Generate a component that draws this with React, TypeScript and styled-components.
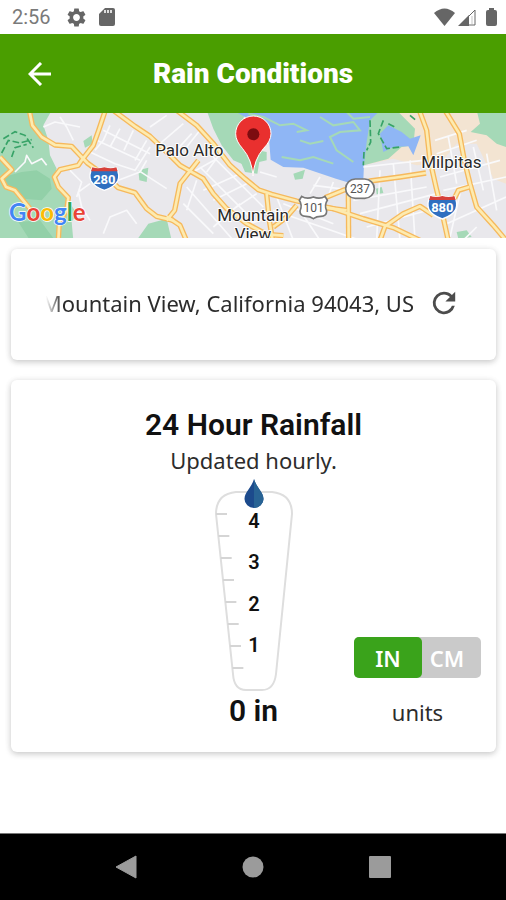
import React, { useState } from "react";
import styled, { createGlobalStyle } from "styled-components";

const GlobalStyle = createGlobalStyle`
  *, *::before, *::after { box-sizing: border-box; }
  body { margin: 0; background: #ffffff; color: #1b1b1b; font-family: "Noto Sans", "Open Sans", sans-serif; }
  h1, h2, p { margin: 0; }
  button { border: 0; padding: 0; background: none; font: inherit; color: inherit; cursor: pointer; }
`;

const Screen = styled.div`
  display: flex;
  flex-direction: column;
  min-height: 100vh;
`;

const StatusBar = styled.div`
  display: flex;
  align-items: center;
  justify-content: space-between;
  height: 34px;
  padding: 0 8px 0 12px;
  color: #666666;
`;

const StatusGroup = styled.div<{ $gap: number }>`
  display: flex;
  align-items: center;
  gap: ${(p) => p.$gap}px;

  svg { display: block; }
`;

const Clock = styled.time`
  font: 400 20px/34px Roboto, sans-serif;
  color: #7a7a7a;
  margin-right: 3px;
`;

const Header = styled.header`
  display: grid;
  grid-template-columns: 80px 1fr 80px;
  align-items: center;
  height: 79px;
  background: #4a9e00;
  color: #ffffff;
`;

const BackButton = styled.button`
  display: grid;
  place-items: center;
  height: 56px;
`;

const Title = styled.h1`
  font: 900 28px/36px Roboto, sans-serif;
  text-align: center;
`;

const MapView = styled.svg`
  display: block;
  width: 100%;
  height: 125px;
  background: #e9e8ec;
`;

const Cards = styled.main`
  display: flex;
  flex: 1;
  flex-direction: column;
  gap: 20px;
  padding: 11px 10px 20px 11px;
`;

const Card = styled.section`
  border-radius: 6px;
  background: #ffffff;
  box-shadow: 0 2px 6px rgba(0, 0, 0, 0.2), 0 0 8px rgba(0, 0, 0, 0.04);
`;

const LocationCard = styled(Card)`
  display: flex;
  align-items: center;
  gap: 16px;
  height: 111px;
  padding: 0 38px 3px 35px;
`;

const Address = styled.p`
  display: flex;
  flex: 1;
  min-width: 0;
  justify-content: flex-end;
  overflow: hidden;
  white-space: nowrap;
  font-size: 22px;
  line-height: 32px;
  color: #2c2c2c;
  mask-image: linear-gradient(to right, transparent, #000 16px);
`;

const RefreshButton = styled.button`
  display: grid;
  place-items: center;
  color: #4c4c4c;
`;

const RainCard = styled(Card)`
  padding: 25px 15px 22px;
`;

const Heading = styled.h2`
  font: 600 30px/39px Roboto, sans-serif;
  color: #111111;
  text-align: center;
`;

const Subheading = styled.p`
  font-size: 22px;
  line-height: 32px;
  color: #2c2c2c;
  text-align: center;
`;

const Readings = styled.div`
  display: grid;
  grid-template-columns: 1fr auto 1fr;
  align-items: end;
  margin-top: 2px;
`;

const GaugeColumn = styled.div`
  display: flex;
  flex-direction: column;
  align-items: center;
  grid-column: 2;
`;

const GaugeSvg = styled.svg`
  display: block;
  width: 80px;
  height: 214px;
`;

const Total = styled.output`
  font: 600 30px/38px Roboto, sans-serif;
  color: #111111;
`;

const UnitsColumn = styled.div`
  display: flex;
  flex-direction: column;
  align-items: center;
  justify-self: end;
  gap: 16px;
`;

const Toggle = styled.div`
  display: flex;
  border-radius: 5px;
  background: #cacaca;
`;

const ToggleOption = styled.button<{ $active: boolean }>`
  position: relative;
  z-index: ${(p) => (p.$active ? 1 : 0)};
  width: 68px;
  height: 41px;
  border-radius: 5px;
  background: ${(p) => (p.$active ? "#3aa31b" : "transparent")};
  color: #ffffff;
  font-size: 22px;
  font-weight: 600;

  & + & { margin-left: -9px; }
`;

const UnitsLabel = styled.span`
  font-size: 22px;
  line-height: 36px;
  color: #2c2c2c;
`;

const NavBar = styled.nav`
  display: flex;
  align-items: center;
  justify-content: center;
  gap: 83px;
  height: 67px;
  border-top: 1px solid #777777;
  background: #000000;
  color: #9b9b9b;
`;

const NavButton = styled.button`
  display: grid;
  place-items: center;
  width: 44px;
  height: 44px;
`;

const highways = [
  "M88 0 L97 45 L125 80 L165 104 L215 108 L262 158 L320 200 L355 232 L405 247 L440 295 L470 318 L520 330",
  "M316 0 L296 60 L280 105 L245 150 L235 165 L180 178 L163 200 L175 230 L205 262 L200 300 L178 335 L175 390",
  "M340 0 L405 48 L450 78 L505 130 L540 165 L610 205 L640 250 L680 295 L740 340 L800 372 L850 376",
  "M530 0 L590 45 L640 100 L690 165 L735 205 L775 238 L815 252 L890 272 L1000 295 L1090 325 L1180 352 L1260 390",
  "M595 150 L540 220 L524 300 L500 330 M500 318 L540 345 L560 392",
  "M800 250 L808 330 L818 392 M890 285 L860 320 L820 350",
  "M975 262 L1030 240 L1110 212 L1200 200 L1278 188 M975 292 L1040 300",
  "M1258 0 L1280 60 L1290 150 L1308 230 L1325 300 L1345 392",
  "M1335 0 L1378 70 L1393 150 L1410 220 L1430 290 L1480 345 L1518 390",
  "M1408 230 L1375 240 L1358 275 M1140 390 L1155 348 L1210 310 L1260 288 L1300 315",
  "M1045 250 L1046 392",
  "M0 140 L35 178 L5 205 L18 230 L45 240 L90 295",
];

const streets = [
  "M130 50 L165 35 L240 50 M180 20 L200 50 L220 90 M330 45 L310 90 L285 120 M360 55 L330 110 M400 60 L372 120 M440 90 L405 150 M310 60 L450 130 M290 90 L420 150 M270 125 L345 160 L405 180 L450 110",
  "M355 210 L420 185 L440 150 M415 180 L500 235 M270 220 L235 245 L245 290 L270 330 M310 370 L330 320 L380 300 L410 340 M210 180 L245 215 L230 260",
  "M450 50 L500 15 M480 100 L550 40 M520 130 L575 70 M620 185 L660 130 M600 60 L560 110",
  "M570 190 L650 145 M610 240 L720 190 M640 270 L740 220 M680 310 L770 250 M600 170 L760 330 M640 140 L790 290 M560 230 L700 390 M550 280 L640 370 M590 210 L560 300 M640 350 L720 280",
  "M780 185 L830 200 M830 260 L880 390 M900 300 L960 390 M940 225 L1060 240 M930 250 L960 200 M1000 215 L970 300 M850 280 L1000 340 M820 300 L1080 390 M750 340 L870 300",
  "M1090 170 L1270 150 M1140 180 L1130 390 M1180 160 L1200 390 M1230 150 L1245 390 M1060 270 L1280 230 M1080 310 L1310 250 M1100 350 L1320 290",
  "M1305 90 L1400 60 M1310 130 L1430 90 M1320 200 L1500 150 M1330 240 L1518 200 M1340 340 L1518 260 M1420 110 L1450 240 M1460 130 L1490 300 M1345 80 L1370 220 M1380 250 L1350 380 M1430 350 L1390 390",
  "M45 185 L75 155 L80 135 L95 160 L125 145 L140 165",
];

const interstateRoutes = [
  { label: "280", x: 313, y: 206 },
  { label: "880", x: 1327, y: 292 },
];

const logoLetters = [
  ["G", "#4285f4"],
  ["o", "#ea4335"],
  ["o", "#fbbc05"],
  ["g", "#4285f4"],
  ["l", "#34a853"],
  ["e", "#ea4335"],
];

function LocationMap() {
  return (
    <MapView viewBox="0 8 1518 375" preserveAspectRatio="xMidYMid slice" role="img" aria-label="Map of Mountain View">
      <rect width="1518" height="390" fill="#e9e8ec" />
      <g fill="#a5d9b7">
        <path d="M0 0H155L130 45L145 90L150 135L170 175L160 205L200 262L230 310L215 335L220 390H0Z" />
        <path d="M620 0H740L715 60L725 110L800 125L800 150L735 165L700 150L665 105L640 55Z" />
        <path d="M720 150L780 142L772 190L735 185ZM250 92L275 75L278 100L255 112ZM415 180L445 172L440 215L418 210ZM445 340L500 325L515 390H410Z" />
      </g>
      <path d="M10 200L65 185L110 180L150 205L155 235L125 270L70 265L25 232ZM55 335L120 330L165 390H90Z" fill="#92d0a8" />
      <path d="M1060 0H1518V220L1480 205L1430 100L1370 100L1320 160L1250 165L1180 145L1090 165Z" fill="#f3e4d2" />
      <path d="M700 0H1195L1165 80L1110 100L1092 160L1090 210L1050 218L1008 205L910 172L850 170L812 148L805 60Z" fill="#8fb6f5" />
      <path d="M1140 0H1190L1245 55L1240 105L1205 110L1165 145L1092 165L1100 95L1110 30Z" fill="#a5d9b7" />
      <path d="M1140 70L1165 45L1205 65L1230 85L1262 75L1240 135L1225 108L1180 110L1150 125Z" fill="#8fb6f5" />
      <path d="M1430 0H1518V110L1490 100L1460 75L1412 65L1440 40ZM1370 365L1400 360L1415 380L1375 385ZM1128 235L1145 230L1150 248L1130 252ZM880 190L915 178L908 205L885 208Z" fill="#a5d9b7" />
      <path d="M745 10L790 20L840 45L880 40L920 60L890 65M960 20L1000 45L1060 35L1080 60L1020 65L990 80L1010 120L1060 155M900 90L930 100L970 92M845 140L900 150L940 140L1000 160M1035 0L1060 25L1110 20" fill="none" stroke="#a5d9b7" strokeWidth="6" />
      <path d="M5 128L25 90L60 98L95 88M10 85L45 64L75 75L100 112M35 140L45 112L80 102M1110 30L1112 95L1100 120M1150 30L1135 70L1160 115L1200 110M1165 40L1185 50M1092 125L1090 165M1230 15L1248 30" fill="none" stroke="#37a367" strokeWidth="5" strokeDasharray="20 8" />
      <g fill="none" stroke="#f9f9fb" strokeWidth="5" strokeLinejoin="round">
        {streets.map((d) => <path key={d} d={d} />)}
      </g>
      <g fill="none" strokeLinejoin="round">
        {highways.map((d) => <path key={d} d={d} stroke="#f6b95c" strokeWidth="16" />)}
        {highways.map((d) => <path key={d} d={d} stroke="#fdebb0" strokeWidth="8" />)}
      </g>
      {interstateRoutes.map((r) => (
        <g key={r.label} transform={`translate(${r.x} ${r.y})`}>
          <path d="M-36 -35Q-20 -29 0 -35Q20 -29 36 -35Q48 -12 40 6Q30 24 0 34Q-30 24 -40 6Q-48 -12 -36 -35Z" fill="#2f6fc0" stroke="#ffffff" strokeWidth="4" />
          <path d="M-36 -35Q-20 -29 0 -35Q20 -29 36 -35L40 -23H-40Z" fill="#d6403a" />
          <text y="14" textAnchor="middle" fill="#ffffff" fontFamily="Roboto, sans-serif" fontWeight="700" fontSize="39">{r.label}</text>
        </g>
      ))}
      <rect x="1037" y="206" width="86" height="58" rx="29" fill="#ffffff" stroke="#777777" strokeWidth="5" />
      <path d="M905 258Q920 268 940 260Q960 268 975 258L982 270Q972 285 980 302Q980 318 962 318Q950 318 940 325Q930 318 918 318Q900 318 900 302Q908 285 898 270Z" fill="#ffffff" stroke="#777777" strokeWidth="5" />
      <g fontFamily="Roboto, sans-serif" fontSize="36" textAnchor="middle" fill="#555555">
        <text x="1080" y="248">237</text>
        <text x="941" y="304">101</text>
      </g>
      <g fontFamily="Roboto, sans-serif" fontSize="51" textAnchor="middle" fill="#292929" stroke="#ffffff" strokeWidth="6" paintOrder="stroke" strokeLinejoin="round">
        <text x="568" y="136">Palo Alto</text>
        <text x="1354" y="174">Milpitas</text>
        <text x="759" y="332">Mountain</text>
        <text x="759" y="388">View</text>
      </g>
      <path d="M759 197Q756 148 728 115Q707 92 707 70A53 53 0 0 1 813 70Q813 92 790 115Q762 148 759 197Z" fill="#e9302f" stroke="#ffffff" strokeWidth="3" />
      <circle cx="760" cy="72" r="18" fill="#7d0c10" />
      <text x="27" y="332" fontFamily="Lato, sans-serif" fontSize="72" fontWeight="700" stroke="#ffffff" strokeWidth="4" paintOrder="stroke">
        {logoLetters.map(([letter, color], i) => <tspan key={i} fill={color}>{letter}</tspan>)}
      </text>
    </MapView>
  );
}

const tickPositions = [36, 58, 80, 102, 124, 146, 168, 190];
const gaugeLabels = [
  { value: 4, y: 50 },
  { value: 3, y: 91 },
  { value: 2, y: 133 },
  { value: 1, y: 174 },
];

function RainGauge() {
  return (
    <GaugeSvg viewBox="0 0 80 214" role="img" aria-label="Rain gauge">
      <path d="M22 14H58Q78 16 78 36L62 196Q60 212 48 212H32Q20 212 19 196L2 36Q2 16 22 14Z" fill="#ffffff" stroke="#dedede" strokeWidth="2" />
      {tickPositions.map((y) => {
        const x = 2 + ((y - 36) * 17) / 160;
        return <path key={y} d={`M${x} ${y}h11`} stroke="#d5d5d5" strokeWidth="2" />;
      })}
      <path d="M40 1C38 9 30.500 14 30.500 21A9.500 9 0 0 0 49.500 21C49.500 14 42 9 40 1Z" fill="#1c4a8c" />
      <path d="M40 1C42 9 49.500 14 49.500 21A9.500 9 0 0 1 40 30Z" fill="#286394" />
      <g fontFamily="Roboto, sans-serif" fontWeight="600" fontSize="20" textAnchor="middle" fill="#111111">
        {gaugeLabels.map((l) => <text key={l.value} x="40" y={l.y}>{l.value}</text>)}
      </g>
    </GaugeSvg>
  );
}

export default function App() {
  const [unit, setUnit] = useState<"in" | "cm">("in");

  return (
    <Screen>
      <GlobalStyle />
      <StatusBar>
        <StatusGroup $gap={13}>
          <Clock>2:56</Clock>
          <svg width="19" height="19" viewBox="2 2 20 20" fill="currentColor" aria-hidden="true">
            <path d="M19.140 12.940c.04-.3.060-.610.060-.940 0-.320-.020-.640-.070-.940l2.030-1.580c.180-.140.230-.410.120-.610l-1.920-3.320c-.120-.220-.370-.290-.590-.220l-2.390.960c-.500-.380-1.030-.700-1.620-.940l-.360-2.540c-.040-.240-.240-.410-.480-.410h-3.840c-.240 0-.430.170-.470.410l-.360 2.540c-.590.240-1.130.570-1.620.940l-2.390-.960c-.220-.080-.470 0-.590.220L2.740 8.870c-.120.210-.080.470.120.610l2.030 1.580c-.050.300-.090.630-.090.940s.020.640.070.940l-2.030 1.580c-.180.140-.230.410-.120.610l1.920 3.320c.120.220.370.290.590.220l2.390-.960c.500.380 1.030.700 1.620.940l.360 2.540c.050.240.240.410.480.410h3.840c.240 0 .440-.170.470-.410l.360-2.540c.590-.240 1.130-.560 1.620-.940l2.390.960c.220.080.470 0 .590-.220l1.920-3.320c.120-.220.070-.470-.120-.610l-2.010-1.580zM12 15.600c-1.980 0-3.600-1.620-3.600-3.600s1.620-3.600 3.600-3.600 3.600 1.620 3.600 3.600-1.620 3.600-3.600 3.600z" />
          </svg>
          <svg width="16" height="18" viewBox="0 0 16 18" aria-hidden="true">
            <path d="M6 0H14Q16 0 16 2V16Q16 18 14 18H2Q0 18 0 16V6Z" fill="currentColor" />
            <path d="M6 2V5M9 2V5M12 2V5" stroke="#dddddd" strokeWidth="2" />
          </svg>
        </StatusGroup>
        <StatusGroup $gap={3}>
          <svg width="21" height="18" viewBox="0 0 21 18" fill="currentColor" aria-hidden="true">
            <path d="M0 5Q10.500-4 21 5L10.500 18Z" />
          </svg>
          <svg width="18" height="18" viewBox="0 0 18 18" aria-hidden="true">
            <path d="M17 2V17H2Z" fill="none" stroke="currentColor" strokeWidth="1" />
            <path d="M11 7V18H0Z" fill="currentColor" />
            <path d="M14 8V16" stroke="#e2e2e2" strokeWidth="2" />
          </svg>
          <svg width="19" height="18" viewBox="0 0 19 18" fill="currentColor" aria-hidden="true">
            <path d="M10 0H15V2H16Q18 2 18 4V16Q18 18 16 18H9Q7 18 7 16V4Q7 2 9 2H10Z" />
          </svg>
        </StatusGroup>
      </StatusBar>

      <Header>
        <BackButton type="button" aria-label="Back">
          <svg width="24" height="24" viewBox="0 0 24 24" fill="none" stroke="currentColor" strokeWidth="3">
            <path d="M23 12H3M13 1L2 12L13 23" />
          </svg>
        </BackButton>
        <Title>Rain Conditions</Title>
      </Header>

      <LocationMap />

      <Cards>
        <LocationCard>
          <Address>Mountain View, California 94043, US</Address>
          <RefreshButton type="button" aria-label="Refresh location">
            <svg width="28" height="28" viewBox="2 2 20 20" fill="currentColor">
              <path d="M17.650 6.350A7.960 7.960 0 0 0 12 4a8 8 0 1 0 7.730 10h-2.080A6 6 0 1 1 12 6c1.660 0 3.140.690 4.220 1.780L13 11h7V4z" />
            </svg>
          </RefreshButton>
        </LocationCard>

        <RainCard>
          <Heading>24 Hour Rainfall</Heading>
          <Subheading>Updated hourly.</Subheading>
          <Readings>
            <GaugeColumn>
              <RainGauge />
              <Total>0 {unit}</Total>
            </GaugeColumn>
            <UnitsColumn>
              <Toggle role="group" aria-labelledby="units-label">
                <ToggleOption type="button" $active={unit === "in"} aria-pressed={unit === "in"} onClick={() => setUnit("in")}>
                  IN
                </ToggleOption>
                <ToggleOption type="button" $active={unit === "cm"} aria-pressed={unit === "cm"} onClick={() => setUnit("cm")}>
                  CM
                </ToggleOption>
              </Toggle>
              <UnitsLabel id="units-label">units</UnitsLabel>
            </UnitsColumn>
          </Readings>
        </RainCard>
      </Cards>

      <NavBar aria-label="System navigation">
        <NavButton type="button" aria-label="Back">
          <svg width="22" height="24" viewBox="0 0 22 24" fill="currentColor"><path d="M21 1V23L1 12Z" stroke="currentColor" strokeLinejoin="round" /></svg>
        </NavButton>
        <NavButton type="button" aria-label="Home">
          <svg width="22" height="22" viewBox="0 0 22 22" fill="currentColor"><circle cx="11" cy="11" r="10.500" /></svg>
        </NavButton>
        <NavButton type="button" aria-label="Recent apps">
          <svg width="22" height="22" viewBox="0 0 22 22" fill="currentColor"><rect width="22" height="22" rx="1" /></svg>
        </NavButton>
      </NavBar>
    </Screen>
  );
}
